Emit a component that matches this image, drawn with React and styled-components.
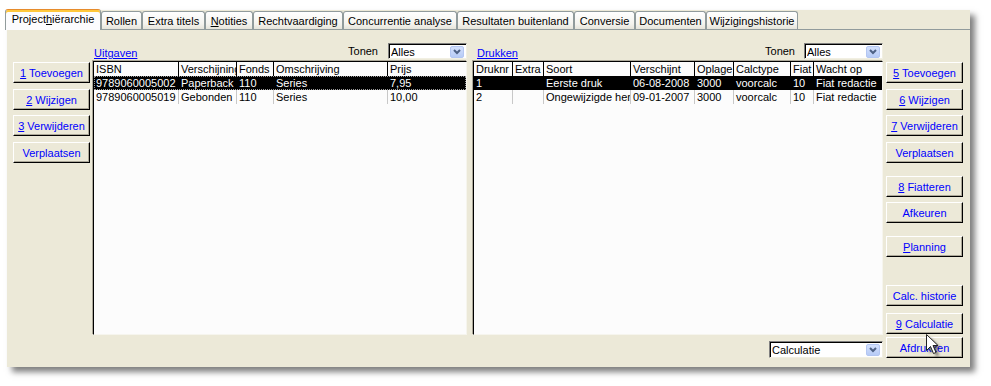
import React from 'react';
import styled, { createGlobalStyle } from 'styled-components';

const GlobalStyle = createGlobalStyle`
  html, body { margin: 0; padding: 0; background: #fff; }
  body { font-family: "Liberation Sans", Arial, sans-serif; font-size: 11px; color: #000; }
  * { box-sizing: border-box; }
`;

const Page = styled.div`
  position: relative;
  width: 991px;
  height: 386px;
  padding: 10px 0 0 7px;
  overflow: hidden;
`;

const Window = styled.div`
  width: 963px;
  height: 357px;
  background: #ece9d8;
  box-shadow: 5px 5px 6px rgba(0, 0, 0, 0.5);
  display: flex;
  flex-direction: column;
`;

const TabStrip = styled.div`
  display: flex;
  align-items: flex-end;
  height: 20px;
  border-bottom: 1px solid #919b9c;
`;

const Tab = styled.div`
  width: ${(p) => p.$w}px;
  height: ${(p) => (p.$active ? 21 : 18)}px;
  margin-left: ${(p) => (p.$active ? -2 : 0)}px;
  margin-bottom: ${(p) => (p.$active ? -1 : 0)}px;
  position: relative;
  z-index: ${(p) => (p.$active ? 1 : 0)};
  border: 1px solid #919b9c;
  border-bottom: none;
  border-top: ${(p) => (p.$active ? '1px solid #e68b2c' : '1px solid #919b9c')};
  border-radius: 3px 3px 0 0;
  background: ${(p) =>
    p.$active ? '#fcfcfe' : 'linear-gradient(#ffffff, #f4f3ee 70%, #e6e4da)'};
  box-shadow: ${(p) => (p.$active ? 'inset 0 2px 0 #ffc83c' : 'none')};
  display: flex;
  align-items: center;
  justify-content: center;
  padding-bottom: ${(p) => (p.$active ? 2 : 0)}px;
  padding-top: ${(p) => (p.$active ? 0 : 1)}px;
  white-space: nowrap;
`;

const Mn = styled.span`
  text-decoration: underline;
`;

const Content = styled.div`
  flex: 1;
  display: flex;
  padding-left: 6px;
`;

const ButtonColumn = styled.div`
  width: 77px;
  display: flex;
  flex-direction: column;
  padding-top: 32px;
  margin-left: ${(p) => p.$ml || 0}px;
`;

const Button = styled.button`
  width: 77px;
  height: 21px;
  margin: ${(p) => p.$mt || 0}px 0 0 0;
  padding: 0;
  background: #ece9d8;
  border: 1px solid;
  border-color: #fff #000 #000 #fff;
  box-shadow: inset -1px -1px 0 #aca899;
  color: #0000ff;
  font-family: "Liberation Sans", Arial, sans-serif;
  font-size: 11px;
  text-align: center;
  white-space: nowrap;
`;

const Panel = styled.div`
  width: ${(p) => p.$w}px;
  margin-left: ${(p) => p.$ml}px;
  display: flex;
  flex-direction: column;
  padding-top: 13px;
`;

const PanelHeader = styled.div`
  height: 16px;
  display: flex;
  align-items: center;
  margin-bottom: 2px;
`;

const PanelLabel = styled.span`
  color: #0000ff;
  text-decoration: underline;
  margin-left: ${(p) => p.$ml}px;
  padding-top: 4px;
`;

const Spacer = styled.div`
  flex: 1;
`;

const ComboLabel = styled.span`
  margin-right: ${(p) => p.$mr}px;
`;

const Combo = styled.div`
  width: ${(p) => p.$w}px;
  height: ${(p) => p.$h}px;
  background: #fff;
  border: 1px solid;
  border-color: #808080 #f1efe2 #f1efe2 #808080;
  box-shadow: inset 1px 1px 0 #000;
  display: flex;
  align-items: center;
  padding: 1px 2px 0 2px;
  white-space: nowrap;
`;

const ComboText = styled.span`
  flex: 1;
  overflow: hidden;
`;

const DropButton = styled.div`
  width: 14px;
  height: 12px;
  border-radius: 2px;
  background: linear-gradient(#d3e0fd, #b7cbf6);
  border: 1px solid #b3c6f2;
  display: flex;
  align-items: center;
  justify-content: center;
`;

const Grid = styled.div`
  height: 274px;
  background: #fcfcfc;
  border-top: 1px solid #000;
  border-left: 1px solid #000;
  border-right: 1px solid #f6f5ee;
  border-bottom: 1px solid #f6f5ee;
  box-shadow: -1px -1px 0 #aca899;
  overflow: hidden;
`;

const Row = styled.div`
  display: grid;
  grid-template-columns: ${(p) => p.$cols};
  height: 14px;
  background: ${(p) => (p.$selected ? '#000' : 'transparent')};
  color: ${(p) => (p.$selected ? '#fff' : '#000')};
  outline: ${(p) => (p.$focus ? '1px dotted #9a9a9a' : 'none')};
  outline-offset: -1px;
`;

const Cell = styled.div`
  padding-left: 2px;
  line-height: 14px;
  white-space: nowrap;
  overflow: hidden;
  border-left: 1px solid ${(p) => p.$sep};
  &:first-child {
    border-left: none;
  }
`;

const Footer = styled.div`
  display: flex;
  justify-content: flex-end;
  margin-top: 6px;
`;

const Cursor = styled.svg`
  position: absolute;
  left: 926px;
  top: 334px;
`;

const mnemonic = (s) => {
  const i = s.indexOf('&');
  if (i < 0) return s;
  return (
    <>
      {s.slice(0, i)}
      <Mn>{s[i + 1]}</Mn>
      {s.slice(i + 2)}
    </>
  );
};

const tabs = [
  { label: 'Project&hiërarchie', w: 96, active: true },
  { label: 'Rollen', w: 41 },
  { label: 'Extra titels', w: 63 },
  { label: '&Notities', w: 48 },
  { label: 'Rechtvaardiging', w: 90 },
  { label: 'Concurrentie analyse', w: 114 },
  { label: 'Resultaten buitenland', w: 117 },
  { label: 'Conversie', w: 61 },
  { label: 'Documenten', w: 71 },
  { label: 'Wijzigingshistorie', w: 92 },
];

const leftButtons = [
  { label: '&1 Toevoegen', mt: 0 },
  { label: '&2 Wijzigen', mt: 6 },
  { label: '&3 Verwijderen', mt: 5 },
  { label: 'Verplaatsen', mt: 6 },
];

const rightButtons = [
  { label: '&5 Toevoegen', mt: 0 },
  { label: '&6 Wijzigen', mt: 6 },
  { label: '&7 Verwijderen', mt: 5 },
  { label: 'Verplaatsen', mt: 6 },
  { label: '&8 Fiatteren', mt: 13 },
  { label: 'Afkeuren', mt: 5 },
  { label: '&Planning', mt: 13 },
  { label: 'Calc. historie', mt: 28 },
  { label: '&9 Calculatie', mt: 7 },
  { label: 'Afdrukken', mt: 3 },
];

const leftCols = '84px 58px 37px 114px 1fr';
const leftHead = ['ISBN', 'Verschijning', 'Fonds', 'Omschrijving', 'Prijs'];
const leftRows = [
  ['9789060005002', 'Paperback', '110', 'Series', '7,95'],
  ['9789060005019', 'Gebonden', '110', 'Series', '10,00'],
];

const rightCols = '38px 31px 87px 64px 39px 57px 23px 1fr';
const rightHead = ['Druknr', 'Extra', 'Soort', 'Verschijnt', 'Oplage', 'Calctype', 'Fiat', 'Wacht op'];
const rightRows = [
  ['1', '', 'Eerste druk', '06-08-2008', '3000', 'voorcalc', '10', 'Fiat redactie'],
  ['2', '', 'Ongewijzigde herdruk', '09-01-2007', '3000', 'voorcalc', '10', 'Fiat redactie'],
];

const Chevron = () => (
  <svg width="8" height="6" viewBox="0 0 8 6">
    <polyline points="1,1 4,4 7,1" fill="none" stroke="#4d6185" strokeWidth="2" />
  </svg>
);

const ComboBox = ({ w, h, value }) => (
  <Combo $w={w} $h={h}>
    <ComboText>{value}</ComboText>
    <DropButton>
      <Chevron />
    </DropButton>
  </Combo>
);

const DataGrid = ({ cols, head, rows, focus }) => (
  <Grid>
    <Row $cols={cols}>
      {head.map((h) => (
        <Cell key={h} $sep="#000">
          {h}
        </Cell>
      ))}
    </Row>
    {rows.map((r, i) => (
      <Row key={i} $cols={cols} $selected={i === 0} $focus={focus && i === 0}>
        {r.map((c, j) => (
          <Cell key={j} $sep={i === 0 ? '#000' : '#c8c8c8'}>
            {c}
          </Cell>
        ))}
      </Row>
    ))}
  </Grid>
);

export default function App() {
  return (
    <>
      <GlobalStyle />
      <Page>
        <Window>
          <TabStrip>
            {tabs.map((t) => (
              <Tab key={t.label} $w={t.w} $active={t.active}>
                {mnemonic(t.label)}
              </Tab>
            ))}
          </TabStrip>
          <Content>
            <ButtonColumn>
              {leftButtons.map((b) => (
                <Button key={b.label} $mt={b.mt}>
                  {mnemonic(b.label)}
                </Button>
              ))}
            </ButtonColumn>
            <Panel $w={374} $ml={3}>
              <PanelHeader>
                <PanelLabel $ml={1}>Uitgaven</PanelLabel>
                <Spacer />
                <ComboLabel $mr={10}>Tonen</ComboLabel>
                <ComboBox w={79} h={16} value="Alles" />
              </PanelHeader>
              <DataGrid cols={leftCols} head={leftHead} rows={leftRows} focus />
            </Panel>
            <Panel $w={410} $ml={6}>
              <PanelHeader>
                <PanelLabel $ml={4}>Drukken</PanelLabel>
                <Spacer />
                <ComboLabel $mr={9}>Tonen</ComboLabel>
                <ComboBox w={79} h={16} value="Alles" />
              </PanelHeader>
              <DataGrid cols={rightCols} head={rightHead} rows={rightRows} />
              <Footer>
                <ComboBox w={114} h={17} value="Calculatie" />
              </Footer>
            </Panel>
            <ButtonColumn $ml={3}>
              {rightButtons.map((b) => (
                <Button key={b.label} $mt={b.mt}>
                  {mnemonic(b.label)}
                </Button>
              ))}
            </ButtonColumn>
          </Content>
        </Window>
        <Cursor width="22" height="26" viewBox="0 0 22 26">
          <defs>
            <filter id="cshadow" x="-50%" y="-50%" width="200%" height="200%">
              <feGaussianBlur stdDeviation="1.4" />
            </filter>
          </defs>
          <path d="M3.5 3.5 L3.5 19.5 L7.5 15.5 L10.5 22.5 L13 21.5 L10 14.5 L15 14.5 Z" fill="rgba(0,0,0,0.55)" filter="url(#cshadow)" />
          <path d="M0.5 0.5 L0.5 16.5 L4.5 12.5 L7.5 19.5 L10 18.5 L7 11.5 L12 11.5 Z" fill="#fff" stroke="#222" strokeWidth="1" />
        </Cursor>
      </Page>
    </>
  );
}
